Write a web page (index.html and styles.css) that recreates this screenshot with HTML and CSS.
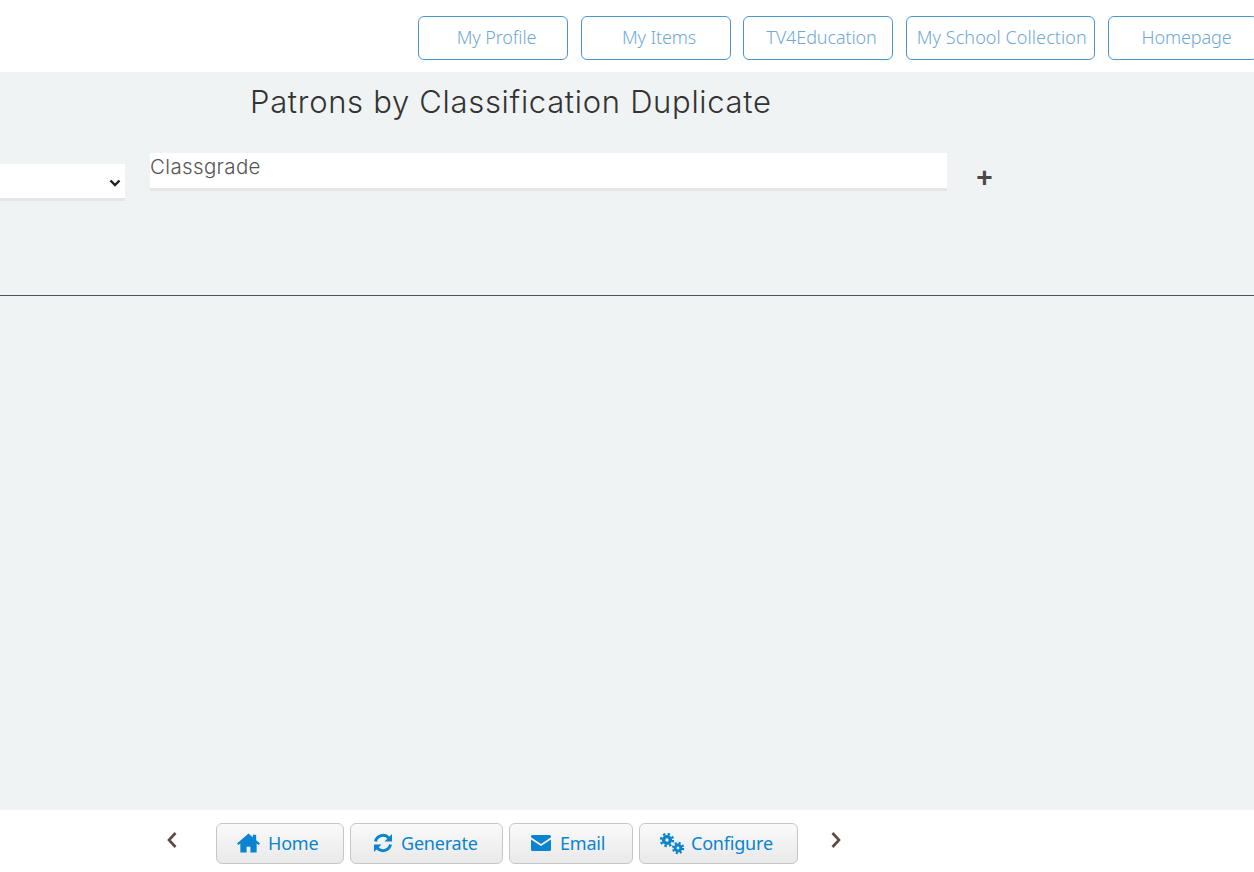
FILE: index.html
```html
<!DOCTYPE html>
<html lang="en">
<head>
<meta charset="utf-8">
<title>Patrons by Classification Duplicate</title>
<link rel="stylesheet" href="styles.css">
</head>
<body>
<header class="topbar">
  <a class="nav-btn" href="#">My Profile</a>
  <a class="nav-btn" href="#">My Items</a>
  <a class="nav-btn" href="#">TV4Education</a>
  <a class="nav-btn nav-wide" href="#">My School Collection</a>
  <a class="nav-btn" href="#">Homepage</a>
</header>
<main class="content">
  <h1 class="title">Patrons by Classification Duplicate</h1>
  <div class="filter-row">
    <div class="select-box">
      <svg class="chevron-down" viewBox="0 0 12 8" width="12" height="8"><path d="M1.500 1.500 6 6l4.500-4.500" fill="none" stroke="#222" stroke-width="2.400"/></svg>
    </div>
    <div class="text-box">Classgrade</div>
    <button class="add-btn" type="button">+</button>
  </div>
  <hr class="rule">
</main>
<footer class="footbar">
  <svg class="arrow arrow-left" viewBox="0 0 12 18" width="12" height="18"><path d="M9.500 2 3 9l6.500 7" fill="none" stroke="#5b4a3f" stroke-width="2.600"/></svg>
  <div class="actions">
    <button class="act act-home" type="button">
      <svg class="ico" viewBox="0 0 24 20" width="23" height="20"><path fill="#0a84d0" d="M12 0 0 10.500l1.500 1.700L3.500 10.500V20h6.500v-6h4v6h6.500v-9.500l2 1.700 1.500-1.700L20 7V1.500h-3.500v2.400z"/></svg>Home
    </button>
    <button class="act act-gen" type="button">
      <svg class="ico" viewBox="0 0 20 20" width="20" height="20"><path fill="none" stroke="#0a84d0" stroke-width="3" d="M2.500 8.500A7.700 7.700 0 0 1 15.800 5"/><path fill="#0a84d0" d="M19 1v7.500h-7.500z"/><path fill="none" stroke="#0a84d0" stroke-width="3" d="M17.500 11.500A7.700 7.700 0 0 1 4.200 15"/><path fill="#0a84d0" d="M1 19v-7.500h7.500z"/></svg>Generate
    </button>
    <button class="act act-mail" type="button">
      <svg class="ico" viewBox="0 0 20 16" width="20" height="16"><path fill="#0a84d0" d="M1.500 0h17A1.500 1.500 0 0 1 20 1.500v.8L10 9 0 2.300v-.8A1.500 1.500 0 0 1 1.500 0zM0 4.400 10 11 20 4.400v10.100a1.500 1.500 0 0 1-1.500 1.500h-17A1.500 1.500 0 0 1 0 14.500z"/></svg>Email
    </button>
    <button class="act act-conf" type="button">
      <svg class="ico ico-gears" viewBox="0 0 26 22" width="26" height="22"><g fill="none" stroke="#0a84d0"><circle cx="8" cy="7" r="3.400" stroke-width="3.400"/><circle cx="8" cy="7" r="6" stroke-width="2.400" stroke-dasharray="2.400 2.300"/><circle cx="19" cy="15" r="2.900" stroke-width="3"/><circle cx="19" cy="15" r="5" stroke-width="2.400" stroke-dasharray="2 1.930"/></g></svg>Configure
    </button>
  </div>
  <svg class="arrow arrow-right" viewBox="0 0 12 18" width="12" height="18"><path d="M2.500 2 9 9l-6.500 7" fill="none" stroke="#5b4a3f" stroke-width="2.600"/></svg>
</footer>
</body>
</html>
```

FILE: styles.css
```css
* { box-sizing: border-box; }
html, body { margin: 0; height: 100%; overflow: hidden; }
body {
  width: 1254px;
  height: 872px;
  display: flex;
  flex-direction: column;
  background: #fff;
  font-family: "Open Sans", "Noto Sans", sans-serif;
}
.topbar {
  height: 72px;
  flex: none;
  display: flex;
  gap: 12.5px;
  padding: 16px 0 12px 418px;
  overflow: hidden;
}
.nav-btn {
  flex: none;
  width: 150px;
  height: 44px;
  display: flex;
  align-items: center;
  justify-content: center;
  padding: 0 0 2px 7px;
  border: 1px solid #4a97d0;
  border-radius: 6px;
  color: #6fa9d6;
  font-family: "Noto Sans", sans-serif;
  font-weight: 300;
  font-size: 18px;
  font-stretch: 87%;
  letter-spacing: -0.1px;
  text-decoration: none;
}
.nav-wide { width: 189.5px; margin-right: 0.5px; padding: 0 0 2px 3px; letter-spacing: 0.08px; }
.content {
  flex: 1;
  background: #eff3f4;
}
.title {
  margin: 0;
  padding: 10px 0 0 250px;
  height: 81px;
  font-family: "Inter", "Lato", sans-serif;
  font-weight: 300;
  font-size: 31px;
  line-height: 40px;
  letter-spacing: 0.69px;
  color: #333;
}
.filter-row {
  display: flex;
  align-items: flex-start;
  height: 142px;
}
.select-box {
  width: 125px;
  height: 37px;
  margin-top: 11px;
  padding: 15px 0 0 109px;
  background: #fff;
  border-bottom: 3px solid #e5e5e5;
}
.chevron-down { display: block; }
.text-box {
  width: 797px;
  height: 38px;
  margin-left: 25px;
  background: #fff;
  border-bottom: 3px solid #e5e5e5;
  font-family: "Inter", "Lato", sans-serif;
  font-weight: 300;
  font-size: 20.5px;
  line-height: 28px;
  letter-spacing: 0.35px;
  color: #555;
}
.add-btn {
  margin: 7px 0 0 26px;
  padding: 0;
  width: 23px;
  height: 36px;
  border: 0;
  background: none;
  font-family: "Liberation Sans", sans-serif;
  font-weight: 700;
  font-size: 28px;
  line-height: 36px;
  color: #4c4744;
}
.rule {
  margin: 0;
  border: 0;
  height: 1px;
  background: #4a5560;
}
.footbar {
  height: 62px;
  flex: none;
  display: flex;
  align-items: flex-start;
}
.arrow { flex: none; margin-top: 21px; }
.arrow-left { margin-left: 166px; }
.arrow-right { margin-left: 32px; }
.actions {
  display: flex;
  gap: 6px;
  margin: 13px 0 0 38px;
}
.act {
  height: 41px;
  display: flex;
  align-items: center;
  justify-content: flex-start;
  gap: 8px;
  padding: 0 0 2px 20px;
  border: 1px solid #c9c5c5;
  border-radius: 6px;
  background: linear-gradient(#fafafa, #e9e9e9);
  color: #0a84d0;
  font-family: "Noto Sans", sans-serif;
  font-stretch: 87%;
  font-size: 18px;
  letter-spacing: -0.2px;
}
.ico { flex: none; }
.ico-gears { margin-top: 2px; }
.act-home { width: 128px; }
.act-gen { width: 153px; gap: 8px; padding-left: 22px; }
.act-mail { width: 124px; padding-left: 21px; gap: 9px; }
.act-conf { width: 159px; gap: 6px; padding-left: 19px; }
```
